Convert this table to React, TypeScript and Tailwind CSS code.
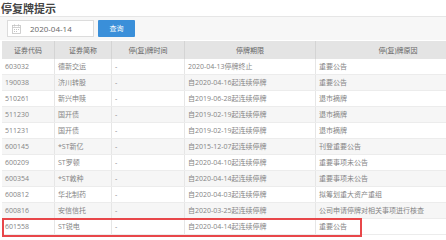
const rows = [
  ["603032", "德新交运", "-", "2020-04-13停牌终止", "重要公告"],
  ["190038", "济川转股", "-", "自2020-04-16起连续停牌", "重要公告"],
  ["510261", "新兴申赎", "-", "自2019-06-28起连续停牌", "退市摘牌"],
  ["511230", "国开债", "-", "自2019-02-19起连续停牌", "退市摘牌"],
  ["511231", "国开债", "-", "自2019-02-19起连续停牌", "退市摘牌"],
  ["600145", "*ST新亿", "-", "自2015-12-07起连续停牌", "刊登重要公告"],
  ["600209", "ST罗顿", "-", "自2020-04-10起连续停牌", "重要事项未公告"],
  ["600354", "*ST敦种", "-", "自2020-04-14起连续停牌", "重要事项未公告"],
  ["600812", "华北制药", "-", "自2020-04-03起连续停牌", "拟筹划重大资产重组"],
  ["600816", "安信信托", "-", "自2020-03-25起连续停牌", "公司申请停牌对相关事项进行核查"],
  ["601558", "ST锐电", "-", "自2020-04-14起连续停牌", "重要公告"],
];

const headers = ["证券代码", "证券简称", "停(复)牌时间", "停牌期限", "停(复)牌原因"];

const cols = "grid grid-cols-[53px_57px_73px_131px_164px]";

function CalendarIcon() {
  return (
    <svg width="9" height="10" viewBox="0 0 9 10" fill="none" stroke="#c4c4c4" strokeWidth="0.8">
      <rect x="0.5" y="1.5" width="8" height="8" />
      <line x1="0.5" y1="3.5" x2="8.5" y2="3.5" />
      <line x1="2.5" y1="0.3" x2="2.5" y2="2.5" />
      <line x1="6.5" y1="0.3" x2="6.5" y2="2.5" />
      <rect x="2" y="5" width="1" height="1" fill="#c4c4c4" stroke="none" />
      <rect x="4" y="5" width="1" height="1" fill="#c4c4c4" stroke="none" />
      <rect x="6" y="5" width="1" height="1" fill="#c4c4c4" stroke="none" />
      <rect x="2" y="7" width="1" height="1" fill="#c4c4c4" stroke="none" />
      <rect x="4" y="7" width="1" height="1" fill="#c4c4c4" stroke="none" />
    </svg>
  );
}

export default function App() {
  return (
    <div className="h-[240px] w-[446px] overflow-hidden bg-white font-['Open_Sans','Noto_Sans_CJK_SC',sans-serif]">
      {/* title */}
      <div className="flex h-[17px] items-center border-b border-[#e6e6e6] pl-px text-[11px] font-bold leading-none text-[#444]">
        停复牌提示
      </div>

      {/* toolbar */}
      <div className="flex h-[23px] items-center gap-[4px] bg-[#f7f7f7] pl-[7px]">
        <div className="flex h-[17px] w-[87px] items-center gap-[9px] border border-[#dcdcdc] bg-white pl-[4px]">
          <CalendarIcon />
          <span className="text-[8px] leading-none text-[#666]">2020-04-14</span>
        </div>
        <button className="flex h-[17px] w-[37px] items-center justify-center rounded-[1px] bg-[#3a8fd9] text-[7px] leading-none text-white">
          查询
        </button>
      </div>

      {/* table */}
      <div className="ml-[2px] mt-px w-[478px] text-[7px] leading-none">
        <div className={`${cols} h-[18px] bg-[#e4e4e4] text-[#666]`}>
          {headers.map((h) => (
            <div key={h} className="flex items-center justify-center border-r border-[#d4d4d4] last:border-r-0">
              {h}
            </div>
          ))}
        </div>
        {rows.map((r, i) => (
          <div
            key={r[0]}
            className={`${cols} relative h-[16px] border-b border-[#ececec] text-[#858585] ${i % 2 === 1 ? "bg-[#f6f6f6]" : "bg-white"}`}
          >
            {r.map((c, j) => (
              <div key={j} className="flex items-center border-r border-[#e6e6e6] pl-[3px] last:border-r-0">
                {c}
              </div>
            ))}
            {i === rows.length - 1 && (
              <div className="absolute -top-px left-0 h-[19px] w-[360px] border-2 border-[#e8474a]" />
            )}
          </div>
        ))}
      </div>
    </div>
  );
}
